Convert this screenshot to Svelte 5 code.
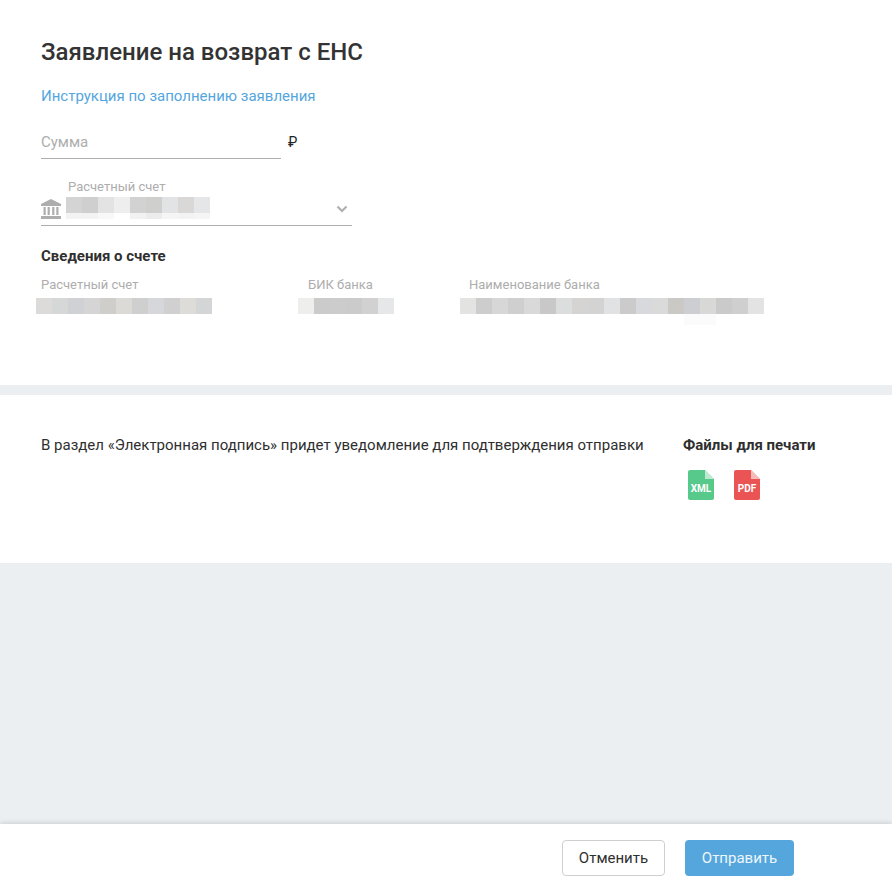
<script>
	// masked values, one colour per 16px cell
	const selectTop = ["#d4d4d4", "#cfcfcf", "#e3e3e3", "#eeeeee", "#d2d2d2", "#cfcfcd", "#e2e3e5", "#d9d8d6", "#e5e6e8"];
	const selectLow = ["#f3f3f3", "#f3f3f3", "#f8f8f8", "#ffffff", "#f2f2f2", "#ececec", "#f5f5f5", "#f3f3f3", "#f5f5f5"];
	const account = ["#dcdbd9", "#d6d8d8", "#cfd1d4", "#d5d5d5", "#cfcecb", "#dbdad7", "#cfcfcf", "#d5d7da", "#d0d0d0", "#dddcd9", "#d4d5d7"];
	const bik = ["#eeeeed", "#cbcbcb", "#cccccc", "#cbcbcb", "#d1d1d1", "#e6e7e9"];
	const bank = ["#e3e3e2", "#cdcdcd", "#d7d7d7", "#cfcfcf", "#d9d9d9", "#c8c8c8", "#dcdedd", "#d6d4d2", "#d3d3d3", "#e1e2e4", "#cbcbcb", "#d8d9dc", "#dadada", "#cbc9c6", "#cdced1", "#d8d8d7", "#cacaca", "#cfcfcf", "#e2e3e2"];
</script>

{#snippet mosaic(cells)}
	<div class="mosaic">
		{#each cells as c}
			<span style="background:{c}"></span>
		{/each}
	</div>
{/snippet}

<div class="page">
	<section class="form">
		<h1>Заявление на возврат с ЕНС</h1>
		<a class="link" href="#instr">Инструкция по заполнению заявления</a>

		<div class="sum-row">
			<div class="sum-input">Сумма</div>
			<span class="rub">₽</span>
		</div>

		<div class="select">
			<svg class="bank-icon" width="20" height="20" viewBox="0 0 20 20">
				<path d="M10 0 20 5v2H0V5z" fill="#adadad" />
				<path d="M2.5 8h2.2v8H2.5zM6.6 8h2.2v8H6.6zM11.2 8h2.2v8h-2.2zM15.3 8h2.2v8h-2.2z" fill="#adadad" />
				<path d="M0 17h20v3H0z" fill="#adadad" />
			</svg>
			<div class="select-value">
				<div class="select-label">Расчетный счет</div>
				{@render mosaic(selectTop)}
				<div class="low">{@render mosaic(selectLow)}</div>
			</div>
			<svg class="chevron" width="12" height="8" viewBox="0 0 12 8">
				<path d="M1.5 1.5 6 6l4.5-4.5" fill="none" stroke="#b0b0b0" stroke-width="2.2" />
			</svg>
		</div>

		<h2>Сведения о счете</h2>
		<div class="details">
			<div class="col col-account">
				<div class="label">Расчетный счет</div>
				{@render mosaic(account)}
			</div>
			<div class="col col-bik">
				<div class="label">БИК банка</div>
				{@render mosaic(bik)}
			</div>
			<div class="col col-bank">
				<div class="label">Наименование банка</div>
				{@render mosaic(bank)}
				<div class="faint"></div>
			</div>
		</div>
	</section>

	<section class="notice">
		<p>В раздел «Электронная подпись» придет уведомление для подтверждения отправки</p>
		<div class="files">
			<div class="files-title">Файлы для печати</div>
			<div class="file-icons">
				<div class="file xml"><span>XML</span></div>
				<div class="file pdf"><span>PDF</span></div>
			</div>
		</div>
	</section>

	<div class="spacer"></div>

	<footer>
		<button class="cancel" type="button">Отменить</button>
		<button class="send" type="button">Отправить</button>
	</footer>
</div>

<style>
	:global(body) {
		margin: 0;
		background: #eceff2;
	}

	.page {
		width: 892px;
		height: 884px;
		display: flex;
		flex-direction: column;
		font-family: Roboto, sans-serif;
		color: #2f2f2f;
		overflow: hidden;
	}

	.form {
		height: 385px;
		box-sizing: border-box;
		padding: 39px 0 0 41px;
		background: #fff;
	}

	h1 {
		margin: 0;
		font-size: 24px;
		line-height: 26px;
		font-weight: 500;
		color: #333;
	}

	.link {
		display: block;
		margin-top: 21px;
		font-size: 15px;
		line-height: 20px;
		color: #55a6dd;
		text-decoration: none;
	}

	.sum-row {
		display: flex;
		margin-top: 23px;
	}

	.sum-input {
		width: 240px;
		height: 30px;
		box-sizing: border-box;
		border-bottom: 1px solid #adadad;
		font-size: 15px;
		line-height: 24px;
		color: #adadad;
		padding-top: 1px;
	}

	.rub {
		margin-left: 7px;
		font-size: 14px;
		line-height: 26px;
		color: #222;
	}

	.select {
		position: relative;
		display: flex;
		width: 311px;
		height: 47px;
		margin-top: 20px;
		box-sizing: border-box;
		border-bottom: 1px solid #adadad;
	}

	.bank-icon {
		margin-top: 20px;
	}

	.select-value {
		margin-left: 5px;
	}

	.select-label {
		margin: 0 0 2px 2px;
		font-size: 13px;
		line-height: 16px;
		color: #adadad;
	}

	.low {
		height: 6px;
		overflow: hidden;
	}

	.chevron {
		position: absolute;
		right: 4px;
		top: 26px;
	}

	h2 {
		margin: 20px 0 0;
		font-size: 15px;
		line-height: 20px;
		font-weight: 700;
		color: #2f2f2f;
	}

	.details {
		display: flex;
		margin-top: 11px;
	}

	.col-account {
		width: 267px;
	}

	.col-bik {
		width: 161px;
	}

	.label {
		font-size: 13px;
		line-height: 16px;
		color: #adadad;
	}

	.mosaic {
		display: flex;
		height: 16px;
	}

	.mosaic span {
		width: 16px;
		flex: none;
	}

	.col-account .mosaic {
		margin: 5px 0 0 -5px;
	}

	.col-bik .mosaic {
		margin: 5px 0 0 -10px;
	}

	.col-bank .mosaic {
		margin: 5px 0 0 -9px;
	}

	.faint {
		width: 32px;
		height: 11px;
		margin-left: 215px;
		background: #fbfbfb;
	}

	.notice {
		display: flex;
		height: 168px;
		margin-top: 10px;
		box-sizing: border-box;
		padding: 40px 0 0 41px;
		background: #fff;
	}

	.notice p {
		width: 642px;
		margin: 0;
		font-size: 15px;
		line-height: 20px;
		color: #2f2f2f;
	}

	.files-title {
		font-size: 15px;
		line-height: 20px;
		font-weight: 700;
		color: #2f2f2f;
	}

	.file-icons {
		display: flex;
		gap: 20px;
		margin: 15px 0 0 5px;
	}

	.file {
		position: relative;
		width: 26px;
		height: 30px;
		border-radius: 2px;
		clip-path: polygon(0 0, 17px 0, 100% 9px, 100% 100%, 0 100%);
		color: #fff;
		font-size: 10px;
		font-weight: 700;
		text-align: center;
		line-height: 10px;
	}

	.file::after {
		content: "";
		position: absolute;
		right: 0;
		top: 0;
		width: 9px;
		height: 9px;
		background: rgba(255, 255, 255, 0.6);
	}

	.file span {
		position: absolute;
		left: 0;
		right: 0;
		top: 14px;
	}

	.xml {
		background: #57c98a;
	}

	.pdf {
		background: #ea5455;
	}

	.spacer {
		flex: 1;
	}

	footer {
		display: flex;
		justify-content: flex-end;
		gap: 20px;
		height: 60px;
		box-sizing: border-box;
		padding: 16px 98px 0 0;
		background: #fff;
		box-shadow: 0 -1px 5px rgba(0, 0, 0, 0.14);
	}

	button {
		height: 36px;
		border-radius: 4px;
		font-family: Roboto, sans-serif;
		font-size: 15px;
		padding: 0;
	}

	.cancel {
		width: 103px;
		background: #fff;
		border: 1px solid #cfcfcf;
		color: #2f2f2f;
	}

	.send {
		width: 109px;
		background: #55a6dd;
		border: none;
		color: #eef6fb;
	}
</style>
